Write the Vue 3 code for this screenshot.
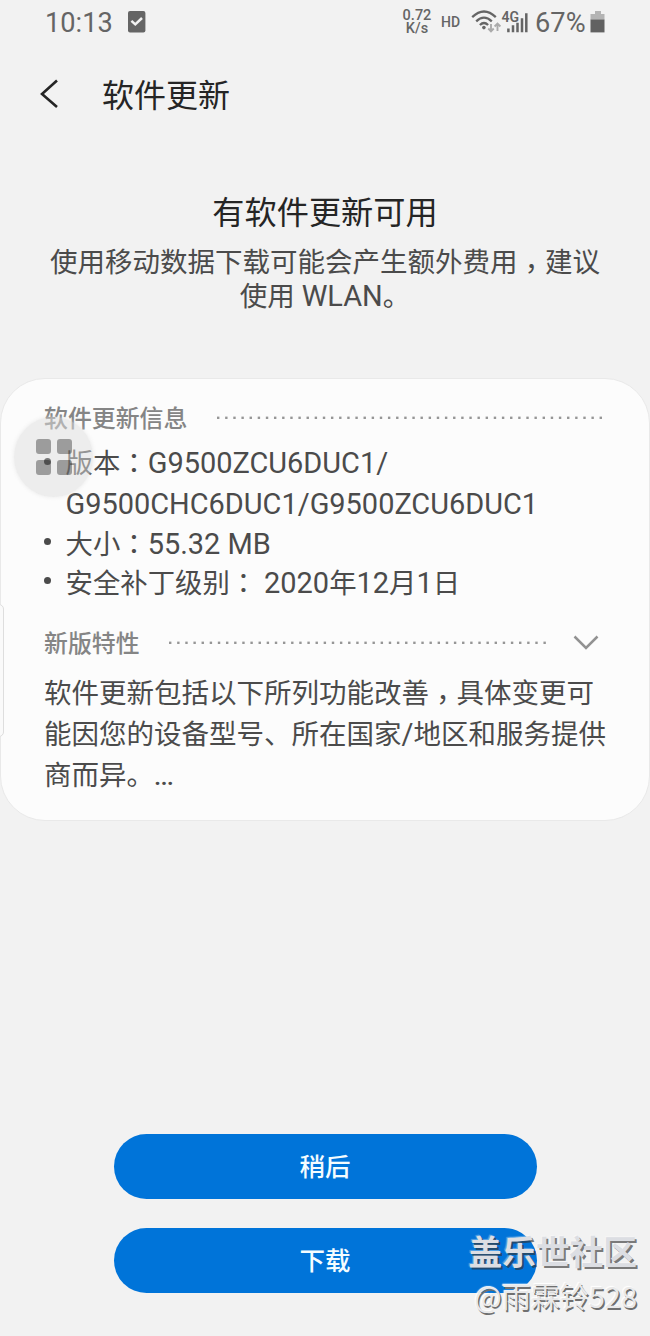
<script setup>
const notice = { before: '使用移动数据下载可能会产生额外费用', after: '建议' }
const dots = (n) => Array.from({ length: n }, (_, i) => i)
</script>

<template>
  <div class="screen">
    <header class="status">
      <span class="time">10:13</span>
      <svg class="task" width="18" height="22" viewBox="0 0 18 22">
        <rect width="17.4" height="21.6" rx="2" fill="#656565" />
        <path d="M3.4 9.8 7.3 13.4 14 7" fill="none" stroke="#f2f2f2" stroke-width="2.5" />
      </svg>
      <div class="speed"><span>0.72</span><span>K/s</span></div>
      <span class="hd">HD</span>
      <svg class="signal" width="58" height="26" viewBox="0 0 58 26">
        <g fill="none" stroke="#656565" stroke-width="2.3">
          <path d="M1.2 8.2Q13-3.2 24.8 8.2" />
          <path d="M5.2 12.4Q13 4.8 20.8 12.4" />
          <path d="M8.9 16Q13 12 17.1 16" />
        </g>
        <circle cx="12.9" cy="18.6" r="1.8" fill="#656565" />
        <g fill="none" stroke="#aaa" stroke-width="1.9">
          <path d="M20 15v7M17.3 19.5 20 22.4l2.7-2.9M26.5 22v-7.2M23.6 17.5l2.9-3 2.9 3" />
        </g>
        <text x="30.5" y="13.2" class="net">4G</text>
        <path d="M37.4 19.5v3.8M42 16.2v7.1M46.5 13.7v9.6M51 9.2v14.1M55.3 4.2v19.1" stroke="#656565" stroke-width="2.5" />
      </svg>
      <span class="pct">67%</span>
      <svg class="battery" width="16" height="22" viewBox="0 0 16 22">
        <path d="M5 0h6v3h3.5v6H.5V3H5z" fill="#b4b4b4" />
        <path d="M.5 8.6h14v12.8H.5z" fill="#616161" />
      </svg>
    </header>

    <nav class="bar">
      <svg width="20" height="30" viewBox="0 0 20 30">
        <path d="M18 1.5 3 15l15 13" fill="none" stroke="#252525" stroke-width="2.6" />
      </svg>
      <h1>软件更新</h1>
    </nav>

    <section class="intro">
      <h2>有软件更新可用</h2>
      <p>{{ notice.before }}<span class="comma">，</span>{{ notice.after }}<br>使用 <span class="latin">WLAN</span>。</p>
    </section>

    <main class="card">
      <div class="head">
        <h3>软件更新信息</h3>
        <svg class="dots" width="388" height="4"><rect v-for="i in dots(48)" :key="i" :x="i * 8.14" y="0.6" width="2.4" height="2.4" fill="#969696" /></svg>
      </div>
      <ul>
        <li class="version">版本<span class="colon">：</span><span class="latin">G9500ZCU6DUC1/</span><br><span class="latin">G9500CHC6DUC1/G9500ZCU6DUC1</span></li>
        <li>大小<span class="colon">：</span><span class="latin">55.32 MB</span></li>
        <li>安全补丁级别<span class="colon">：</span> <span class="latin">2020</span>年<span class="latin">12</span>月<span class="latin">1</span>日</li>
      </ul>
      <div class="head second">
        <h3>新版特性</h3>
        <svg class="dots" width="380" height="4"><rect v-for="i in dots(47)" :key="i" :x="i * 8.14" y="0.6" width="2.4" height="2.4" fill="#969696" /></svg>
        <svg class="chevron" width="26" height="16" viewBox="0 0 26 16"><path d="M1.5 1.5 13 13 24.5 1.5" fill="none" stroke="#929292" stroke-width="2.5" /></svg>
      </div>
      <p class="desc">软件更新包括以下所列功能改善<span class="comma">，</span>具体变更可<br>能因您的设备型号、所在国家<span class="latin">/</span>地区和服务提供<br>商而异。<span class="more">...</span></p>
      <div class="bubble"><i></i><i></i><i></i><i></i></div>
      <div class="edge"></div>
    </main>

    <footer class="actions">
      <button>稍后</button>
      <button>下载</button>
    </footer>
    <div class="watermark"><b>盖乐世社区</b><span>@雨霖铃528</span></div>
  </div>
</template>

<style>
body { background: #f2f2f2; }
</style>

<style scoped>
* { box-sizing: border-box; margin: 0; padding: 0; }
.screen {
  position: relative;
  display: flex;
  flex-direction: column;
  width: 650px;
  height: 1336px;
  overflow: hidden;
  background: #f2f2f2;
  color: #4b4b4b;
  font-family: Roboto, "Noto Sans CJK SC", sans-serif;
  white-space: nowrap;
}
.status { display: flex; height: 46px; padding-left: 45px; align-items: center; color: #656565; }
.time { width: 83px; font-size: 27.2px; line-height: 46px; }
.task { margin-top: -2px; }
.speed { display: flex; flex-direction: column; width: 32px; height: 28px; margin-left: 255px; margin-top: -1px; align-items: center; font-size: 14.5px; font-weight: 500; line-height: 13px; }
.hd { margin-left: 8px; margin-top: -3px; font-size: 14px; font-weight: 500; }
.signal { margin-left: 11px; margin-top: -3px; }
.net { font: 600 14px Roboto, sans-serif; fill: #656565; }
.pct { width: 55px; margin-left: 6px; font-size: 27.2px; }
.battery { margin-top: -2px; }
.bar { display: flex; height: 100px; padding-left: 39px; align-items: center; margin-top: -2px; }
.bar h1 { margin-left: 43px; margin-top: 4px; color: #252525; font-size: 32px; font-weight: 400; line-height: 48px; }
.intro { height: 146px; margin-top: 45px; text-align: center; }
.intro h2 { color: #252525; font-size: 32.2px; font-weight: 400; line-height: 48px; }
.intro p { margin-top: 9px; font-size: 27.5px; line-height: 34px; }
.comma { font-family: "Noto Sans CJK TC", sans-serif; line-height: 0; vertical-align: -7px; }
.colon { font-family: "Noto Sans CJK TC", sans-serif; line-height: 1; }
.latin { font-size: 28.95px; line-height: 1; }
.card { position: relative; height: 443px; margin-top: 43px; padding: 19px 0 0 44px; border: 1px solid #e9e9e9; border-radius: 45px; background: #fcfcfc; }
.head { display: flex; height: 38px; align-items: center; color: #858585; }
.head h3 { width: 173px; height: 38px; font-size: 23.9px; font-weight: 500; line-height: 42px; }
.dots { margin-top: 2px; }
.card .head, .card ul, .card .desc { margin-left: -1px; }
.second h3 { width: 125px; }
.chevron { margin-left: 24px; margin-top: 2px; }
.card .head.second { margin-top: 19px; }
ul { list-style: none; padding-left: 21.5px; font-size: 27.4px; line-height: 39px; }
li { position: relative; height: 39px; }
li::before { content: ""; position: absolute; left: -22px; top: 12px; width: 7px; height: 7px; border-radius: 50%; background: #4b4b4b; }
li.version { height: 82px; line-height: 41px; margin-top: 8px; }
li.version::before { top: 14px; background: #111; }
.desc { height: 123px; margin-top: 12px; font-size: 27.5px; line-height: 41px; }
.more { margin-left: 0; font-size: 26px; font-weight: 500; letter-spacing: -.8px; }
.bubble { position: absolute; left: 13px; top: 38px; display: grid; grid-template-columns: 15px 15px; gap: 6px; width: 79px; height: 80px; place-content: center; border-radius: 50%; background: rgba(222, 222, 222, .5); box-shadow: 0 0 4px rgba(222, 222, 222, .6); }
.bubble i { width: 15px; height: 15px; border-radius: 3px; background: rgba(0, 0, 0, .34); }
.edge { position: absolute; left: -7px; top: 225px; width: 10px; height: 133px; border: 1px solid #dedede; border-radius: 5px; background: #fafafa; }
.actions { display: flex; flex-direction: column; gap: 29px; width: 423px; margin: 313px 0 0 113.5px; }
button { height: 65px; border: 0; border-radius: 33px; background: #0074d9; color: #f4fcff; font: 500 25.5px/65px Roboto, "Noto Sans CJK SC", sans-serif; padding-top: 1px; }
.watermark { position: absolute; right: 13px; bottom: 19px; display: flex; flex-direction: column; align-items: flex-end; font-family: "Noto Sans CJK SC", sans-serif; }
.watermark b { color: #dcdee3; font-size: 33.7px; line-height: 44px; text-shadow: 2px 2px .5px rgba(50, 50, 50, .65), -1px -1px 1px rgba(255, 255, 255, .35); }
.watermark span { color: #e9e9e9; font-size: 29px; font-weight: 400; line-height: 44px; text-shadow: 1.5px 1.5px .5px #707070, -1px -1px 1px #fff; }
</style>
